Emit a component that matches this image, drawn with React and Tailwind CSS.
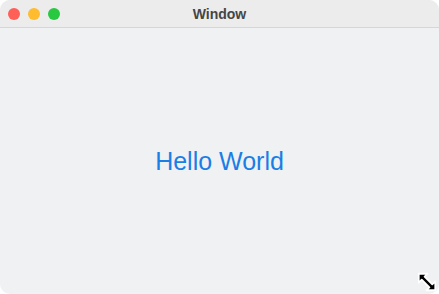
import React from 'react';

function ResizeCursor() {
  return (
    <svg width="22" height="22" viewBox="0 0 20 20" className="absolute right-[1px] bottom-[1px]">
      <path
        d="M2.5 2.5 L10.5 2.5 L7.8 5.2 L14.8 12.2 L17.5 9.5 L17.5 17.5 L9.5 17.5 L12.2 14.8 L5.2 7.8 L2.5 10.5 Z"
        fill="#000"
        stroke="#fff"
        strokeWidth="1.6"
        strokeLinejoin="round"
      />
    </svg>
  );
}

export default function App() {
  return (
    <div className="w-[439px] h-[294px] bg-white" style={{ fontFamily: '"Liberation Sans", Arial, sans-serif' }}>
      <div className="relative w-full h-full rounded-[10px] overflow-hidden bg-[#f0f1f3] flex flex-col">
        <div className="relative h-[28px] shrink-0 bg-[#ececec] border-b border-[#d6d6d6] flex items-center">
          <div className="flex items-center gap-[8px] pl-[8px]">
            <span className="w-[12px] h-[12px] rounded-full bg-[#fe5f57]" />
            <span className="w-[12px] h-[12px] rounded-full bg-[#febc2e]" />
            <span className="w-[12px] h-[12px] rounded-full bg-[#28c840]" />
          </div>
          <div className="absolute inset-0 pt-[2px] flex items-center justify-center text-[14px] font-bold text-[#454545]">
            Window
          </div>
        </div>
        <div className="flex-1 flex items-center justify-center pt-[2px]">
          <span className="text-[25px] text-[#1a7ee6]">Hello World</span>
        </div>
        <ResizeCursor />
      </div>
    </div>
  );
}
